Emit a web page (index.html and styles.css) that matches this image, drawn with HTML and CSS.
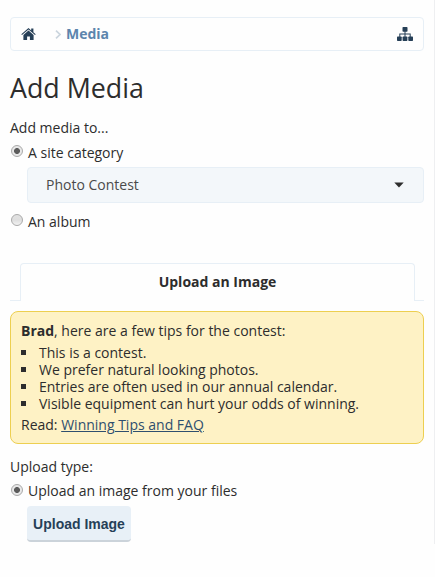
FILE: index.html
```html
<!DOCTYPE html>
<html lang="en">
<head>
  <meta charset="UTF-8" />
  <meta name="viewport" content="width=device-width, initial-scale=1.0" />
  <title>Add Media</title>
  <link rel="stylesheet" href="styles.css">
</head>
<body>
  <div class="page">
    <nav class="breadcrumb">
      <a href="#" class="home" aria-label="Home">
        <svg width="15" height="12" viewBox="0 0 15 12">
          <path d="M.3 6.200 7.500.1l2.700 2.300V.5h2.200v3.700l2.300 2-.7.800L7.500 1.500 1 7z" />
          <path d="M7.500 2.600l5.100 4.300V12H8.900V8.500H6.100V12H2.400V6.900z" />
        </svg>
      </a>
      <svg class="sep" width="6" height="9" viewBox="0 0 6 9"><path d="M1 .7l4 3.800-4 3.800" /></svg>
      <a href="#" class="crumb">Media</a>
      <a href="#" class="sitemap" aria-label="Jump to">
        <svg width="16" height="14" viewBox="0 0 16 14">
          <rect x="5.500" y="0" width="5" height="4.700" rx=".7" />
          <rect x="0" y="9.500" width="4.700" height="4.500" rx=".7" />
          <rect x="5.600" y="9.500" width="4.800" height="4.500" rx=".7" />
          <rect x="11.300" y="9.500" width="4.700" height="4.500" rx=".7" />
          <path d="M7.500 4h1v2.600h5.200V10h-1V7.600H8.500V10h-1V7.600H3.300V10h-1V6.600h5.200z" />
        </svg>
      </a>
    </nav>

    <h1>Add Media</h1>

    <form>
      <div class="form-label">Add media to...</div>
      <label class="option"><input type="radio" name="target" checked> A site category</label>
      <div class="select">
        <span>Photo Contest</span>
        <svg width="10" height="6" viewBox="0 0 10 6"><path d="M.3.400h9.400L5 5.500z" /></svg>
      </div>
      <label class="option album"><input type="radio" name="target"> An album</label>

      <div class="tabs">
        <div class="tab">Upload an Image</div>
      </div>

      <div class="tips">
        <div><b>Brad</b>, here are a few tips for the contest:</div>
        <ul>
          <li>This is a contest.</li>
          <li>We prefer natural looking photos.</li>
          <li>Entries are often used in our annual calendar.</li>
          <li>Visible equipment can hurt your odds of winning.</li>
        </ul>
        <div>Read: <a href="#">Winning Tips and FAQ</a></div>
      </div>

      <div class="form-label type-label">Upload type:</div>
      <label class="option type-option"><input type="radio" name="type" checked> Upload an image from your files</label>
      <button type="button" class="upload">Upload Image</button>
    </form>
  </div>
</body>
</html>
```

FILE: styles.css
```css
:root {
  --border: #e7eff6;
  --navy: #263f57;
  --text: #2d2d2d;
}
* { box-sizing: border-box; }
body {
  margin: 0;
  background: #fefefe;
  color: var(--text);
  font: 14px/20px "Open Sans", "Noto Sans", sans-serif;
}
.page {
  height: 544px;
  padding: 17px 10px 0;
  border-right: 1px solid #eeeff1;
}

.breadcrumb {
  height: 34px;
  padding: 0 10px;
  display: flex;
  align-items: center;
  border: 1px solid var(--border);
  border-radius: 4px;
}
.breadcrumb a { display: flex; text-decoration: none; }
.home, .sitemap { fill: var(--navy); }
.sep {
  margin: 1px 5px 0 19px;
  fill: none;
  stroke: #cbd5de;
  stroke-width: 1.7;
}
.breadcrumb .crumb { color: #5c85ad; font-weight: 700; }
.sitemap { margin-left: auto; }

h1 {
  margin: 17px 0 20px;
  font-size: 26.8px;
  line-height: 40px;
  font-weight: 400;
}
.form-label { height: 20px; margin-top: -10px; }
.option {
  height: 20px;
  margin-top: 5px;
  display: flex;
  gap: 5px;
}
.option input {
  appearance: none;
  width: 12px;
  height: 12px;
  margin: 2px 0 0 1px;
  border: 1px solid #aaa;
  border-radius: 50%;
  background: linear-gradient(#e2e2e2, #dedede 50%, #f2f2f2);
}
.option input:checked {
  background: radial-gradient(circle, #5c5c5c 2.600px, #e8e8e8 3.300px);
}

.select {
  height: 36px;
  margin: 4px 0 0 17px;
  padding: 0 19px 0 18px;
  display: flex;
  align-items: center;
  justify-content: space-between;
  background: #f3f7fa;
  border: 1px solid var(--border);
  border-radius: 4px;
  color: #4a4a4a;
}
.select svg { fill: #2d2d2d; }
.album { margin-top: 9px; }

/* the lines left and right of the tab join its bottom corners */
.tabs {
  height: 38px;
  margin-top: 31px;
  display: flex;
}
.tabs::before, .tabs::after {
  content: "";
  width: 10px;
  border-bottom: 1px solid var(--border);
}
.tabs::after { width: 9px; }
.tab {
  flex: 1;
  padding-top: 8px;
  border: 1px solid var(--border);
  border-bottom: 0;
  border-radius: 4px 4px 0 0;
  font-weight: 700;
  text-align: center;
}

.tips {
  height: 133px;
  margin-top: 10px;
  padding: 9px 10px;
  background: #fef2c5;
  border: 1px solid #edcf50;
  border-radius: 8px;
}
.tips ul {
  margin: 3px 0;
  padding-left: 18px;
  list-style: none;
  line-height: 17px;
}
.tips li::before {
  content: "";
  float: left;
  width: 5px;
  height: 5px;
  margin: 6px 0 0 -18px;
  background: var(--text);
}
.tips a { color: #2f4f6e; }

.type-label { margin-top: 13px; }
.type-option { margin-top: 4px; }
.type-option input { margin-top: 3px; }
.upload {
  display: block;
  width: 104px;
  height: 36px;
  margin: 5px 0 0 17px;
  padding: 2px 0 0;
  background: #e8f0f7;
  border: 0;
  border-bottom: 2px solid #cbd3da;
  border-radius: 4px;
  color: var(--navy);
  font: bold 14px "Liberation Sans", Arial, sans-serif;
}
```
